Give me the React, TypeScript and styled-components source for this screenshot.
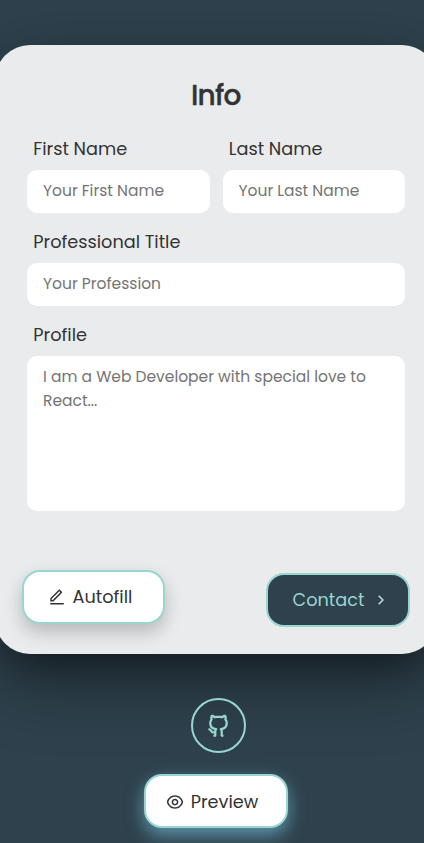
import React from 'react';
import styled, { createGlobalStyle, css } from 'styled-components';
import { RiArrowRightSLine, RiEditLine, RiEyeLine, RiGithubLine } from 'react-icons/ri';

const colors = {
  night: '#2e414c',
  mint: '#98d6d1',
  card: '#e9ebed',
  text: '#333333',
  hint: '#757575',
};

const GlobalStyle = createGlobalStyle`
  *, *::before, *::after { box-sizing: border-box; }
  html, body { margin: 0; height: 100%; overflow: hidden; }
  body {
    background: ${colors.night};
    color: ${colors.text};
    font-family: Poppins, Inter, sans-serif;
  }
`;

const Page = styled.main`
  display: flex;
  flex-direction: column;
  align-items: center;
  width: 442.5px;
  height: 843px;
  margin-left: -5.5px;
  padding-top: 44.5px;
  overflow: hidden;
`;

const Card = styled.form`
  display: flex;
  flex-direction: column;
  width: 100%;
  height: 609px;
  flex: none;
  padding: 32px 32.5px 0;
  border-radius: 35px;
  background: ${colors.card};
  box-shadow: 0 25px 70px rgba(0, 0, 0, 0.38), 0 20px 35px -12px rgba(0, 0, 0, 0.36);
`;

const Title = styled.h1`
  margin: 0;
  font-size: 28px;
  font-weight: 500;
  line-height: 38px;
  letter-spacing: -0.75px;
  text-align: center;
  -webkit-text-stroke: 0.35px currentColor;
`;

const Fields = styled.div`
  display: grid;
  grid-template-columns: 183px 182px;
  justify-content: space-between;
  row-gap: 14px;
  margin-top: 19.5px;
`;

const Field = styled.label<{ $wide?: boolean }>`
  display: flex;
  flex-direction: column;
  ${(p) => p.$wide && css`grid-column: 1 / -1;`}
`;

const Label = styled.span`
  padding-left: 6.3px;
  margin-bottom: 6px;
  font-size: 17.7px;
  line-height: 30px;
`;

const control = css`
  display: block;
  width: 100%;
  border: 0;
  border-radius: 10px;
  background: #fff;
  color: ${colors.text};
  font: inherit;
  font-size: 15.5px;
  outline: none;
  &::placeholder { color: ${colors.hint}; opacity: 1; }
`;

const Input = styled.input`
  ${control}
  height: 43px;
  padding: 0 16px 2px;
`;

const TextArea = styled.textarea`
  ${control}
  height: 155px;
  padding: 9px 16px;
  line-height: 24px;
  resize: none;
`;

const Actions = styled.div`
  display: flex;
  justify-content: space-between;
  margin: 62px -5px 0 -5.5px;
`;

const Button = styled.button<{ $variant: 'lifted' | 'dark' | 'glow' }>`
  display: flex;
  align-items: center;
  width: 144px;
  height: 54px;
  flex: none;
  padding: 0 0 1px 24px;
  gap: 7px;
  border: 2px solid ${colors.mint};
  border-radius: 18px;
  background: #fff;
  color: ${colors.text};
  font: inherit;
  font-size: 17.7px;
  ${(p) => p.$variant === 'lifted' && css`
    width: 143.5px;
    transform: translateY(-3px);
    box-shadow: 0 8px 18px rgba(0, 0, 0, 0.22);
  `}
  ${(p) => p.$variant === 'dark' && css`
    padding-left: 25px;
    gap: 8px;
    background: ${colors.night};
    color: ${colors.mint};
    svg { color: #bcdde3; }
  `}
  ${(p) => p.$variant === 'glow' && css`
    margin-top: 21px;
    padding: 1px 0 0 20px;
    box-shadow: 0 7px 18px rgba(118, 190, 218, 0.68);
  `}
  svg { width: 18px; height: 18px; flex: none; }
`;

const Caption = styled.span`
  white-space: nowrap;
`;

const GithubLink = styled.a`
  display: flex;
  align-items: center;
  justify-content: center;
  width: 55px;
  height: 55px;
  flex: none;
  margin: 44.5px 0 0 5px;
  border: 2px solid ${colors.mint};
  border-radius: 50%;
  color: ${colors.mint};
  svg { width: 27px; height: 27px; }
`;

export default function App() {
  return (
    <>
      <GlobalStyle />
      <Page>
        <Card>
          <Title>Info</Title>
          <Fields>
            <Field>
              <Label>First Name</Label>
              <Input placeholder="Your First Name" />
            </Field>
            <Field>
              <Label>Last Name</Label>
              <Input placeholder="Your Last Name" />
            </Field>
            <Field $wide>
              <Label>Professional Title</Label>
              <Input placeholder="Your Profession" />
            </Field>
            <Field $wide>
              <Label>Profile</Label>
              <TextArea placeholder="I am a Web Developer with special love to React..." />
            </Field>
          </Fields>
          <Actions>
            <Button type="button" $variant="lifted">
              <RiEditLine />
              <Caption>Autofill</Caption>
            </Button>
            <Button type="button" $variant="dark">
              <Caption>Contact</Caption>
              <RiArrowRightSLine />
            </Button>
          </Actions>
        </Card>
        <GithubLink aria-label="GitHub">
          <RiGithubLine />
        </GithubLink>
        <Button type="button" $variant="glow">
          <RiEyeLine />
          <Caption>Preview</Caption>
        </Button>
      </Page>
    </>
  );
}
